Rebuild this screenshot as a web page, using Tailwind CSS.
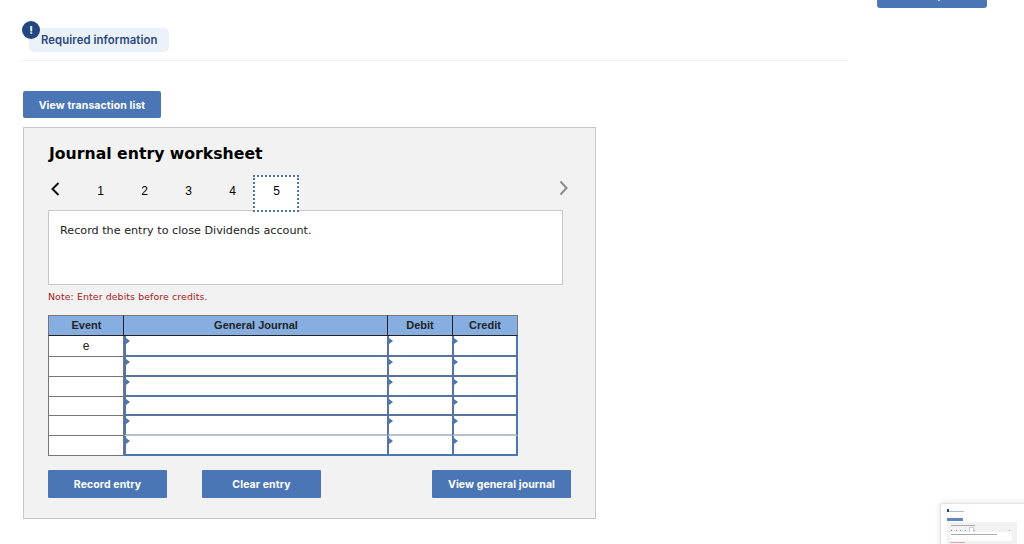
<!DOCTYPE html>
<html>
<head>
<meta charset="utf-8">
<script src="https://cdn.jsdelivr.net/npm/@tailwindcss/browser@4"></script>
</head>
<body class="relative w-[1024px] h-[544px] overflow-hidden bg-white font-['Inter',sans-serif]">
  <!-- top clipped button -->
  <div class="absolute left-[877px] top-[-10px] w-[110px] h-[18px] rounded-[3px] bg-[#4a76b5]">
    <div class="absolute left-[61px] top-[10px] w-[2px] h-[1px] bg-white/70"></div>
  </div>

  <div class="pl-[20px] pt-[21px]">
    <div class="w-[828px] h-[40px] border-b border-[#f0f0f0] relative">
      <div class="absolute left-[9px] top-[7px] w-[140px] h-[24px] rounded-[5px] bg-[#ebf1f9] flex items-center pl-[12px] text-[11.3px] font-semibold text-[#27477f] tracking-[0.1px]">Required information</div>
      <div class="absolute left-[2px] top-0 w-[18px] h-[18px] rounded-full bg-[#234681] flex items-center justify-center text-white text-[11px] font-bold leading-none">!</div>
    </div>
    <button class="mt-[30px] ml-[3px] block w-[138px] h-[27px] pt-[2px] rounded-[2px] bg-[#4a76b5] text-white text-[10.5px] font-bold tracking-[0.1px]">View transaction list</button>

    <section class="mt-[9px] ml-[3px] w-[573px] h-[392px] bg-[#f2f2f2] border border-[#c8c8c8] pl-[24px] pt-[16px]">
      <h1 class="pl-[1px] font-['DejaVu_Sans',sans-serif] font-bold text-[15.7px] leading-[20px] text-black">Journal entry worksheet</h1>

      <div class="mt-[11px] relative h-[37px] flex items-center font-['Liberation_Sans',sans-serif] text-[12px] text-black">
        <div class="w-[30.5px] flex pl-[2px] mb-[10px]">
          <svg width="11" height="16" viewBox="0 0 11 16" fill="none"><path d="M8.5 2 L2.5 8 L8.5 14" stroke="#111" stroke-width="2"/></svg>
        </div>
        <div class="w-[44px] text-center mb-[6px]">1</div>
        <div class="w-[44px] text-center mb-[6px]">2</div>
        <div class="w-[44px] text-center mb-[6px]">3</div>
        <div class="w-[44px] text-center mb-[6px]">4</div>
        <div class="w-[46px] h-[37px] -ml-[1.5px] pb-[6px] pl-[1px] bg-white border-2 border-dotted border-[#4a76b5] flex items-center justify-center relative z-10">5</div>
        <div class="absolute left-[510px] top-[5px]">
          <svg width="11" height="16" viewBox="0 0 11 16" fill="none"><path d="M2.5 1.5 L8.5 8 L2.5 14.5" stroke="#8c8c8c" stroke-width="2"/></svg>
        </div>
      </div>

      <div class="-mt-[2px] w-[515px] h-[75px] bg-white border border-[#c8c8c8] pl-[11px] pt-[12px] font-['DejaVu_Sans',sans-serif] text-[11.2px] leading-[16px] text-[#222]">Record the entry to close Dividends account.</div>

      <p class="mt-[5px] font-['DejaVu_Sans',sans-serif] text-[9.4px] leading-[14px] text-[#a82020] tracking-[0.1px]">Note: Enter debits before credits.</p>

      <div class="mt-[11px] w-[470px] grid grid-cols-[76px_263px_65px_66px] grid-rows-[21px_21px_20px_20px_19px_20px_20px] font-['Liberation_Sans',sans-serif] text-[11px] text-[#222]">
        <div class="pl-[1px] bg-[#86aee0] border border-[#777] border-r-[#222] border-b-[#222] flex items-center justify-center font-bold">Event</div>
        <div class="pl-[1px] bg-[#86aee0] border-y border-t-[#777] border-b-[#222] flex items-center justify-center font-bold">General Journal</div>
        <div class="bg-[#86aee0] border-y border-l border-t-[#777] border-l-[#222] border-b-[#222] flex items-center justify-center font-bold">Debit</div>
        <div class="bg-[#86aee0] border border-t-[#777] border-r-[#777] border-l-[#222] border-b-[#222] flex items-center justify-center font-bold">Credit</div>

        <div class="bg-white border-x border-x-[#777] border-b border-b-[#777] flex items-center justify-center text-[12px]">e</div>
        <div class="bg-white border-l-2 border-b-2 border-[#56749f] relative"><span class="absolute left-0 top-[2px] w-0 h-0 border-y-[3px] border-y-transparent border-l-[4px] border-l-[#4a76b5]"></span></div>
        <div class="bg-white border-l-2 border-b-2 border-[#56749f] relative"><span class="absolute left-0 top-[2px] w-0 h-0 border-y-[3px] border-y-transparent border-l-[4px] border-l-[#4a76b5]"></span></div>
        <div class="bg-white border-x-2 border-b-2 border-[#56749f] border-r-[#4a76b5] relative"><span class="absolute left-0 top-[2px] w-0 h-0 border-y-[3px] border-y-transparent border-l-[4px] border-l-[#4a76b5]"></span></div>

        <div class="bg-white border-x border-x-[#777] border-b border-b-[#777]"></div>
        <div class="bg-white border-l-2 border-b-2 border-[#56749f] relative"><span class="absolute left-0 top-[2px] w-0 h-0 border-y-[3px] border-y-transparent border-l-[4px] border-l-[#4a76b5]"></span></div>
        <div class="bg-white border-l-2 border-b-2 border-[#56749f] relative"><span class="absolute left-0 top-[2px] w-0 h-0 border-y-[3px] border-y-transparent border-l-[4px] border-l-[#4a76b5]"></span></div>
        <div class="bg-white border-x-2 border-b-2 border-[#56749f] border-r-[#4a76b5] relative"><span class="absolute left-0 top-[2px] w-0 h-0 border-y-[3px] border-y-transparent border-l-[4px] border-l-[#4a76b5]"></span></div>

        <div class="bg-white border-x border-x-[#777] border-b border-b-[#777]"></div>
        <div class="bg-white border-l-2 border-b-2 border-[#56749f] relative"><span class="absolute left-0 top-[2px] w-0 h-0 border-y-[3px] border-y-transparent border-l-[4px] border-l-[#4a76b5]"></span></div>
        <div class="bg-white border-l-2 border-b-2 border-[#56749f] relative"><span class="absolute left-0 top-[2px] w-0 h-0 border-y-[3px] border-y-transparent border-l-[4px] border-l-[#4a76b5]"></span></div>
        <div class="bg-white border-x-2 border-b-2 border-[#56749f] border-r-[#4a76b5] relative"><span class="absolute left-0 top-[2px] w-0 h-0 border-y-[3px] border-y-transparent border-l-[4px] border-l-[#4a76b5]"></span></div>

        <div class="bg-white border-x border-x-[#777] border-b border-b-[#777]"></div>
        <div class="bg-white border-l-2 border-b-2 border-[#56749f] relative"><span class="absolute left-0 top-[2px] w-0 h-0 border-y-[3px] border-y-transparent border-l-[4px] border-l-[#4a76b5]"></span></div>
        <div class="bg-white border-l-2 border-b-2 border-[#56749f] relative"><span class="absolute left-0 top-[2px] w-0 h-0 border-y-[3px] border-y-transparent border-l-[4px] border-l-[#4a76b5]"></span></div>
        <div class="bg-white border-x-2 border-b-2 border-[#56749f] border-r-[#4a76b5] relative"><span class="absolute left-0 top-[2px] w-0 h-0 border-y-[3px] border-y-transparent border-l-[4px] border-l-[#4a76b5]"></span></div>

        <div class="bg-white border-x border-x-[#777] border-b border-b-[#777]"></div>
        <div class="bg-white border-l-2 border-l-[#56749f] border-b-2 border-b-[#b5c0d0] relative"><span class="absolute left-0 top-[2px] w-0 h-0 border-y-[3px] border-y-transparent border-l-[4px] border-l-[#4a76b5]"></span></div>
        <div class="bg-white border-l-2 border-l-[#56749f] border-b-2 border-b-[#b5c0d0] relative"><span class="absolute left-0 top-[2px] w-0 h-0 border-y-[3px] border-y-transparent border-l-[4px] border-l-[#4a76b5]"></span></div>
        <div class="bg-white border-x-2 border-l-[#56749f] border-r-[#4a76b5] border-b-2 border-b-[#b5c0d0] relative"><span class="absolute left-0 top-[2px] w-0 h-0 border-y-[3px] border-y-transparent border-l-[4px] border-l-[#4a76b5]"></span></div>

        <div class="bg-white border-x border-x-[#777] border-b border-b-[#777]"></div>
        <div class="bg-white border-l-2 border-l-[#56749f] border-b-2 border-b-[#4a76b5] relative"><span class="absolute left-0 top-[2px] w-0 h-0 border-y-[3px] border-y-transparent border-l-[4px] border-l-[#4a76b5]"></span></div>
        <div class="bg-white border-l-2 border-l-[#56749f] border-b-2 border-b-[#4a76b5] relative"><span class="absolute left-0 top-[2px] w-0 h-0 border-y-[3px] border-y-transparent border-l-[4px] border-l-[#4a76b5]"></span></div>
        <div class="bg-white border-x-2 border-l-[#56749f] border-r-[#4a76b5] border-b-2 border-b-[#4a76b5] relative"><span class="absolute left-0 top-[2px] w-0 h-0 border-y-[3px] border-y-transparent border-l-[4px] border-l-[#4a76b5]"></span></div>
      </div>

      <div class="mt-[14px] w-[523px] flex text-white text-[10.5px] font-bold tracking-[0.1px]">
        <button class="w-[119px] h-[28px] pt-[2px] rounded-[1px] bg-[#4a76b5]">Record entry</button>
        <button class="ml-[35px] w-[119px] h-[28px] pt-[2px] rounded-[1px] bg-[#4a76b5]">Clear entry</button>
        <button class="ml-auto w-[139px] h-[28px] pt-[2px] rounded-[1px] bg-[#4a76b5]">View general journal</button>
      </div>
    </section>
  </div>

  <!-- mini preview thumbnail -->
  <div class="absolute left-[940px] top-[503px] w-[100px] h-[60px] bg-white rounded-tl-[3px] border-t border-l border-[#e4e4e4] shadow-[0_0_6px_rgba(0,0,0,0.12)]">
    <div class="absolute left-[6px] top-[5px] w-[2px] h-[3px] bg-[#234681]"></div>
    <div class="absolute left-[8px] top-[7px] w-[15px] h-[1px] bg-[#a9bddc]"></div>
    <div class="absolute left-[6px] top-[14px] w-[16px] h-[3px] bg-[#5f86bd]"></div>
    <div class="absolute left-[6px] top-[18px] w-[70px] h-[25px] bg-[#f2f2f2]">
      <div class="absolute left-[4px] top-[3px] w-[24px] h-[1px] bg-[#aaa]"></div>
      <div class="absolute left-[4px] top-[8px] w-[1px] h-[1px] bg-[#777]"></div>
      <div class="absolute left-[9px] top-[8px] w-[1px] h-[1px] bg-[#999]"></div>
      <div class="absolute left-[13px] top-[8px] w-[1px] h-[1px] bg-[#999]"></div>
      <div class="absolute left-[18px] top-[8px] w-[1px] h-[1px] bg-[#999]"></div>
      <div class="absolute left-[27px] top-[8px] w-[1px] h-[1px] bg-[#999]"></div>
      <div class="absolute left-[62px] top-[8px] w-[1px] h-[1px] bg-[#999]"></div>
      <div class="absolute left-[22px] top-[5px] w-[5px] h-[6px] bg-white border border-[#c3cfe3]"></div>
      <div class="absolute left-[3px] top-[10px] w-[62px] h-[9px] bg-white"></div>
      <div class="absolute left-[4px] top-[12px] w-[46px] h-[1px] bg-[#aaa]"></div>
      <div class="absolute left-[3px] top-[20px] w-[15px] h-[1px] bg-[#dba9a9]"></div>
    </div>
  </div>
</body>
</html>
